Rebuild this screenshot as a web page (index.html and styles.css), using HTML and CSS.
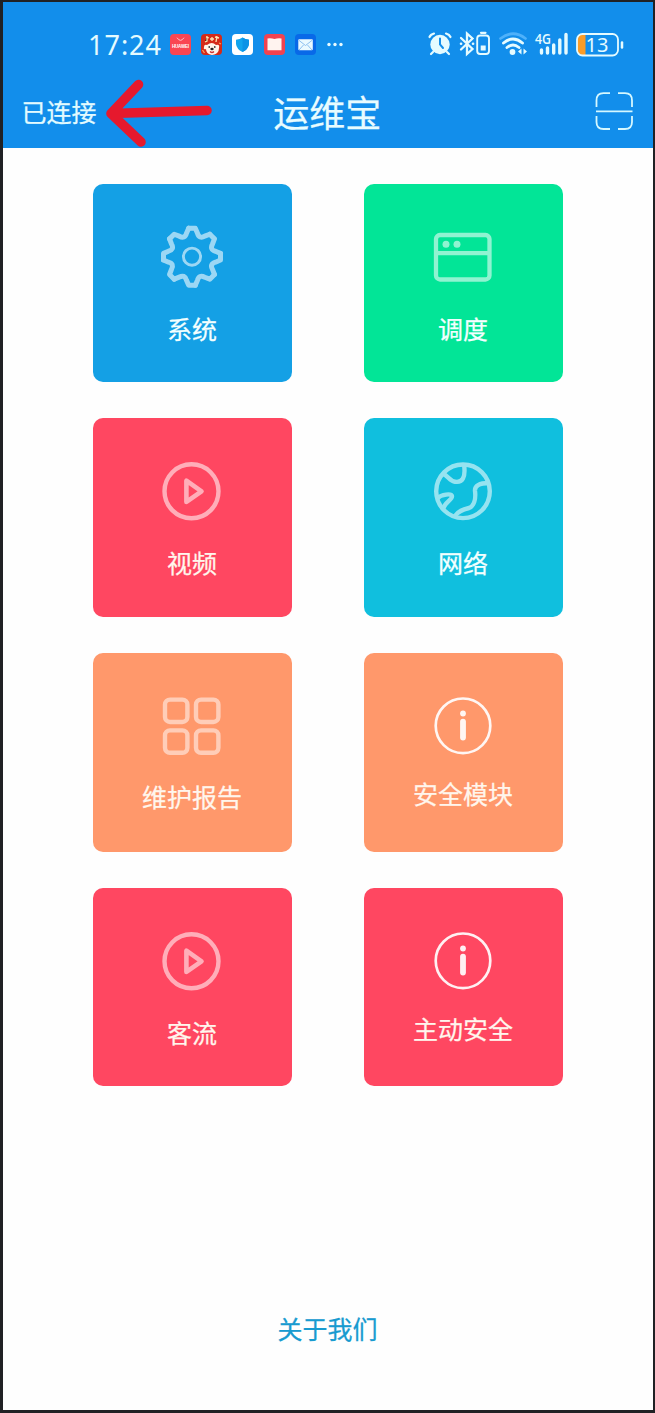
FILE: index.html
```html
<!DOCTYPE html>
<html lang="zh-CN">
<head>
<meta charset="utf-8">
<title>运维宝</title>
<link rel="stylesheet" href="styles.css">
</head>
<body>
<svg class="defs" aria-hidden="true">
  <symbol id="play" viewBox="0 0 66 66">
    <g fill="none" stroke="#fff" stroke-linejoin="round">
      <circle cx="32.5" cy="33.3" r="27" stroke-width="4.4"/>
      <path d="M27.4 22.7V43.9L42.500 33.300Z" stroke-width="4.600"/>
    </g>
  </symbol>
  <symbol id="info" viewBox="0 0 66 66">
    <circle cx="33" cy="32.800" r="27.300" fill="none" stroke="#fff" stroke-width="2.700"/>
    <circle cx="33" cy="20.500" r="2.900" fill="#fff"/>
    <path d="M33 28.700V44.500" stroke="#fff" stroke-width="5.800" stroke-linecap="round"/>
  </symbol>
</svg>
<div class="phone">
  <header class="header">
    <div class="status">
      <span class="time">17:24</span>
      <div class="apps">
        <svg viewBox="0 0 21 21"><rect width="21" height="21" rx="4" fill="#fa4552"/><path d="M7 3.700Q10.500 9 14 3.700" fill="none" stroke="#ffc3c8" stroke-width="1"/><text x="10.500" y="13.600" text-anchor="middle" textLength="17" class="brand">HUAWEI</text></svg>
        <svg viewBox="0 0 21 21"><rect width="21" height="21" rx="4" fill="#d52a18"/><path d="M5 3l3 1M6 2v5l-2 1M11 3v4M9 5h4M14 3l4 1M16 2l-1 6" stroke="#ffe4b0" stroke-width="1.300"/><path d="M3 13Q3 10 6 11Q11 7 15 11Q19 10 18 14Q18 20 11 21Q5 20 5 15Q2 16 3 13Z" fill="#fff4ea"/><path d="M7.500 13h1.500M13 13h1.500" stroke="#222" stroke-width="1.500"/><ellipse cx="11" cy="15" rx="1.700" ry="1.200" fill="#222"/><path d="M9 17.500q2 2 4 0" fill="none" stroke="#c33" stroke-width="1.300"/><path d="M1.500 16l2 3M18 9l2 1" stroke="#f5a15b" stroke-width="1.300"/></svg>
        <svg viewBox="0 0 21 21"><rect width="21" height="21" rx="4" fill="#fff"/><path d="M10.500 3.500Q13 5.500 17 5.700V10Q16.500 15 10.500 18Q4.500 15 4 10V5.700Q8 5.500 10.500 3.500Z" fill="#11a4ed"/><path d="M10.500 3.500Q13 5.500 17 5.700V10Q16.500 15 10.500 18Z" fill="#0b93e6"/></svg>
        <svg viewBox="0 0 21 21"><rect width="21" height="21" rx="4" fill="#f14250"/><path d="M3.500 4.500Q7 4 10.500 5Q14 4 17.500 4.500V16.300H3.500Z" fill="#fff3ef"/></svg>
        <svg viewBox="0 0 21 21"><rect width="21" height="21" rx="4" fill="#0869e8"/><rect x="3.300" y="5.200" width="14.500" height="11" rx="1" fill="#eaf9ff"/><path d="M3.500 6l7 5.500l7-5.500M4 16l4.500-5M17 16l-4.500-5" fill="none" stroke="#8cbff0" stroke-width="1"/></svg>
        <svg class="dots" viewBox="0 0 18 21"><g fill="#e8fbff"><circle cx="3" cy="10.500" r="1.700"/><circle cx="9" cy="10.500" r="1.700"/><circle cx="15" cy="10.500" r="1.700"/></g></svg>
      </div>
      <svg class="system" viewBox="0 0 200 28" fill="none" stroke="#e5fbff" stroke-linecap="round">
        <circle cx="12" cy="14.500" r="9.700" fill="#e5fbff" stroke="none"/>
        <path d="M1.500 7Q2.500 4.500 6 3.500M18 3.500Q21.500 4.500 22.500 7M5 22l-2 2M19 22l2 2" stroke-width="2.200"/>
        <path d="M12 8.500V14.500L15 18" stroke="#128eeb" stroke-width="2"/>
        <path d="M33 8L44.500 19L39 24V3.500L44.500 8.500L33 19.500" stroke-width="2.300"/>
        <path d="M33 13.700h.1M45 13.700h.1" stroke-width="2.600"/>
        <rect x="49.200" y="5.500" width="11.800" height="18.500" rx="3" stroke-width="1.900"/>
        <path d="M53 2.800h4.500" stroke-width="2.200"/><rect x="52.700" y="15.500" width="5" height="5" fill="#e5fbff" stroke="none"/>
        <path d="M72.500 8.500Q85 -1 97.500 8.500" stroke="#4eb1fa" stroke-width="2.700"/>
        <path d="M75.500 13Q85 5 94.500 13M79 17.500Q85 12.500 91 17.500" stroke-width="2.900"/>
        <circle cx="84.500" cy="22" r="2.900" fill="#e5fbff" stroke="none"/>
        <path d="M93.500 18.500v6l-3.500-3zM95.500 18.500v6l3.500-3z" fill="#e5fbff" stroke="none"/>
        <path d="M113.500 20v3M119.500 18v5M125.700 15v8M131.800 10v13M138 4.500v18.500" stroke-width="3.400"/>
        <text x="107" y="14" textLength="16" lengthAdjust="spacingAndGlyphs" class="network">4G</text>
        <path d="M157.500 4v21H154Q149 25 149 20V9Q149 4 154 4Z" fill="#fa9c27" stroke="none"/>
        <rect x="149" y="4" width="41" height="21.500" rx="5.500" stroke-width="1.800"/>
        <path d="M194 12.500v5" stroke-width="2.500"/>
        <text x="157.500" y="22" textLength="23" class="level">13</text>
      </svg>
    </div>
    <div class="nav">
      <span class="connected">已连接</span>
      <h1 class="title">运维宝</h1>
      <svg class="scan" viewBox="0 0 38 38" fill="none" stroke="#d5f8ff" stroke-width="1.800"><path d="M1.500 15V8.500Q1.500 1.200 8.500 1.200H15M23 1.200H30Q37 1.200 37 8.500V15M1.500 24V30Q1.500 37 8.500 37H15M23 37H30Q37 37 37 30V24M1 19.300H37.500"/></svg>
    </div>
    <svg class="arrow" viewBox="0 0 110 72"><path d="M104 32.500L8 35.500M35.500 6.500L8 35.500L38 64" fill="none" stroke="#e6192d" stroke-width="9.600" stroke-linecap="round" stroke-linejoin="round"/></svg>
  </header>
  <main class="tiles">
    <a class="tile blue">
      <svg class="icon" viewBox="0 0 66 66"><g opacity=".58" fill="none" stroke="#fff" transform="translate(33 32.700)">
        <g stroke-width="5" stroke-linecap="round" stroke-linejoin="round">
          <path id="tooth" d="M-3.300-28.500H3.300L5.500-23.500C6.700-19.500 9.200-18.400 12.730-20.500L17.820-22.490"/>
          <use href="#tooth" transform="rotate(45)"/><use href="#tooth" transform="rotate(90)"/><use href="#tooth" transform="rotate(135)"/><use href="#tooth" transform="rotate(180)"/><use href="#tooth" transform="rotate(225)"/><use href="#tooth" transform="rotate(270)"/><use href="#tooth" transform="rotate(315)"/>
        </g><circle r="8.600" stroke-width="2.900"/></g></svg>
      <span class="label">系统</span>
    </a>
    <a class="tile green">
      <svg class="icon" viewBox="0 0 66 66"><g opacity=".56" fill="none" stroke="#fff" stroke-width="4.300"><rect x="6" y="11" width="53.500" height="44.500" rx="4"/><path d="M6 29.200H59.500"/><g fill="#fff" stroke="none"><circle cx="16" cy="20.300" r="3.500"/><circle cx="27" cy="20.300" r="3.500"/></g></g></svg>
      <span class="label">调度</span>
    </a>
    <a class="tile red">
      <svg class="icon soft"><use href="#play"/></svg>
      <span class="label">视频</span>
    </a>
    <a class="tile cyan">
      <svg class="icon" viewBox="0 0 66 66"><g opacity=".56" fill="none" stroke="#fff" stroke-width="4.400" stroke-linejoin="round"><circle cx="33" cy="33.300" r="26.800"/><path d="M13 15.500C18 18 20 23 25 23.700C32 25 36 20 34 6.500M59 25C49 25 44.500 28 45 33C46 41 44 48 39 50C33 51.500 28 53 25 58M7.500 40C11 37 22 34.500 22 38.500C22 42 15 44 13 51"/></g></svg>
      <span class="label">网络</span>
    </a>
    <a class="tile orange report">
      <svg class="icon" viewBox="0 0 66 66"><g opacity=".52" fill="none" stroke="#fff" stroke-width="4.400"><rect x="6" y="6.600" width="22.400" height="22.400" rx="5"/><rect x="37" y="6.600" width="22.400" height="22.400" rx="5"/><rect x="6" y="37.400" width="22.400" height="22.400" rx="5"/><rect x="37" y="37.400" width="22.400" height="22.400" rx="5"/></g></svg>
      <span class="label">维护报告</span>
    </a>
    <a class="tile orange safety">
      <svg class="icon bright"><use href="#info"/></svg>
      <span class="label">安全模块</span>
    </a>
    <a class="tile red">
      <svg class="icon soft"><use href="#play"/></svg>
      <span class="label">客流</span>
    </a>
    <a class="tile red safety">
      <svg class="icon bright"><use href="#info"/></svg>
      <span class="label">主动安全</span>
    </a>
  </main>
  <footer class="footer"><a class="about">关于我们</a></footer>
</div>
</body>
</html>
```
FILE: styles.css
```css
* { box-sizing: border-box; }
body { margin: 0; font-family: "Noto Sans CJK SC", sans-serif; -webkit-text-stroke: .25px; }
.defs { position: absolute; width: 0; height: 0; }
.phone {
  display: flex;
  flex-direction: column;
  width: 655px;
  height: 1413px;
  border: solid #202124;
  border-width: 2px 2px 3px 3px;
  background: #fefefe;
}
.header { position: relative; height: 145.5px; flex: none; background: #128eeb; }
.status { display: flex; align-items: center; height: 84px; padding-left: 85px; }
.time {
  width: 81.5px;
  padding-top: 2px;
  font: 27px/36px "Noto Sans", sans-serif;
  letter-spacing: 1px;
  color: #e5fbff;
  -webkit-text-stroke: 0;
}
.apps { display: flex; gap: 10.4px; }
.apps svg { width: 21px; height: 21px; }
.apps .dots { width: 18px; }
.brand { font: bold 4.5px "Liberation Sans", sans-serif; fill: #fff; -webkit-text-stroke: 0; }
.system { width: 200px; height: 28px; margin-left: 83.5px; }
.network { font: 600 14px "Open Sans", sans-serif; fill: #e5fbff; stroke: none; }
.level { font: 20px "Noto Sans", sans-serif; fill: #e5fbff; stroke: none; }
.nav {
  display: grid;
  grid-template-columns: 1fr auto 1fr;
  align-items: center;
  height: 50px;
  padding: 0 20px 0 18.5px;
}
.connected { font-size: 25px; line-height: 36px; color: #e3fbff; }
.title { margin: 0; font-size: 36px; line-height: 50px; font-weight: 400; color: #e8fcff; }
.scan { justify-self: end; width: 38px; height: 38px; }
.arrow { position: absolute; left: 100px; top: 76px; width: 110px; height: 72px; }
.tiles {
  display: grid;
  grid-template-columns: repeat(2, 198.7px);
  grid-auto-rows: 198.7px;
  gap: 36px 72.3px;
  padding: 36px 0 0 90.2px;
}
.tile {
  display: flex;
  flex-direction: column;
  align-items: center;
  gap: 20px;
  padding-top: 40px;
  border-radius: 10px;
}
.blue { background: #14a0e5; }
.green { background: #02e597; }
.red { background: #ff4761; }
.cyan { background: #10bfde; }
.orange { background: #ff986b; }
.icon { width: 66px; height: 66px; flex: none; margin-right: 1px; }
.soft { opacity: .56; }
.bright { opacity: .92; }
.label { font-size: 25px; line-height: 37px; margin-right: 1px; color: #f3ffff; }
.orange .label, .red .label { color: #fff6ed; }
.report { gap: 19px; }
.safety { gap: 16.5px; }
.footer { display: flex; justify-content: center; margin-top: auto; padding-bottom: 63px; }
.about { font-size: 25px; line-height: 37px; margin-right: 1px; color: #189bd0; }
```
